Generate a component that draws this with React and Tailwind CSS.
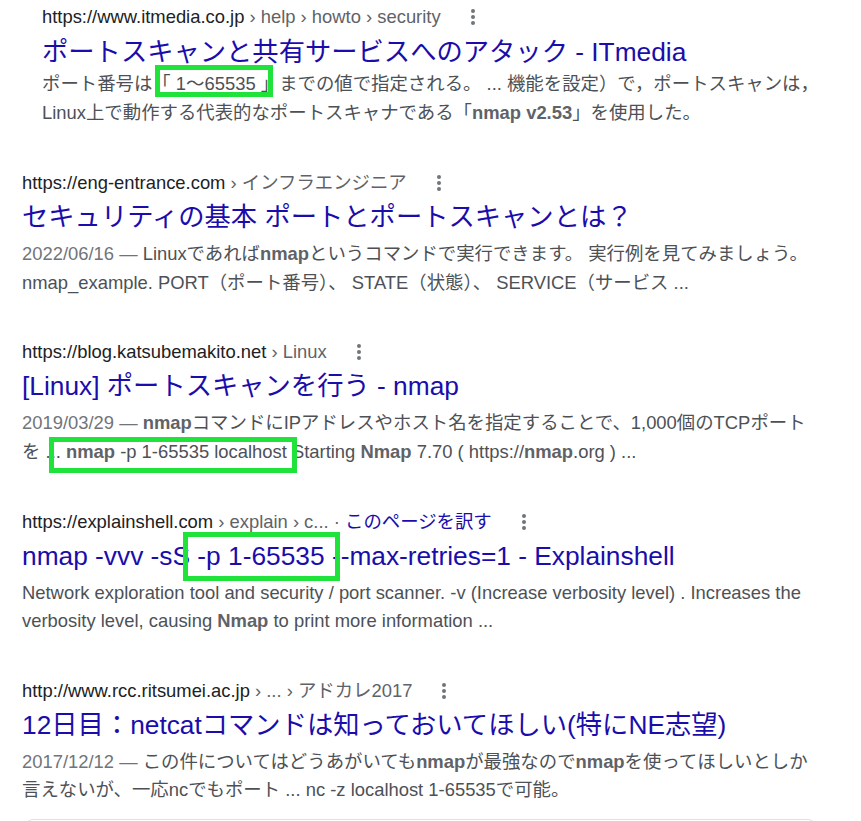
import React from "react";

function Kebab() {
  return (
    <svg width="4" height="16" viewBox="0 0 4 16" className="ml-[30px] shrink-0 fill-[#70757a]">
      <circle cx="2" cy="2" r="2" />
      <circle cx="2" cy="8" r="2" />
      <circle cx="2" cy="14" r="2" />
    </svg>
  );
}

function UrlRow({ children }) {
  return (
    <div className="flex items-center h-[26px] text-[18.4px] leading-[26px]">
      <div className="whitespace-nowrap">{children}</div>
      <Kebab />
    </div>
  );
}

const Sep = () => <span className="text-[#5f6368]"> › </span>;

function B({ children }) {
  return <b className="font-bold text-[#5f6368]">{children}</b>;
}

export default function App() {
  return (
    <div className="relative w-[861px] h-[821px] overflow-hidden bg-white font-['Liberation_Sans','Noto_Sans_CJK_JP',sans-serif]">
      {/* Result 1 */}
      <div className="pl-[42px] pt-[4px]">
        <UrlRow>
          <span className="text-[#202124]">https://www.itmedia.co.jp</span>
          <span className="text-[#5f6368]"> › help › howto › security</span>
        </UrlRow>
        <div className="mt-[5px] text-[26.3px] leading-[34px] text-[#1a0dab] whitespace-nowrap">
          ポートスキャンと共有サービスへのアタック - ITmedia
        </div>
        <div className="mt-[1px] text-[18.4px] leading-[28.6px] text-[#4d5156]">
          <div className="whitespace-nowrap">
            ポート番号は
            <span className="relative inline-block">
              「 1～65535 」
              <span className="absolute left-[3px] right-[6px] -top-[5px] bottom-[2px] border-[5px] border-[#1fe23a]"></span>
            </span>
            までの値で指定される。 ... 機能を設定）で，ポートスキャンは，
          </div>
          <div className="whitespace-nowrap">
            Linux上で動作する代表的なポートスキャナである「<B>nmap v2.53</B>」を使用した。
          </div>
        </div>
      </div>

      {/* Result 2 */}
      <div className="pl-[22px] mt-[43px]">
        <UrlRow>
          <span className="text-[#202124]">https://eng-entrance.com</span>
          <Sep />
          <span className="text-[#5f6368]">インフラエンジニア</span>
        </UrlRow>
        <div className="mt-[4px] text-[26.3px] leading-[34px] text-[#1a0dab] whitespace-nowrap">
          セキュリティの基本 ポートとポートスキャンとは？
        </div>
        <div className="mt-[6px] text-[18.4px] leading-[28.6px] text-[#4d5156]">
          <div className="whitespace-nowrap">
            <span className="text-[#70757a]">2022/06/16 — </span>
            Linuxであれば<B>nmap</B>というコマンドで実行できます。 実行例を見てみましょう。
          </div>
          <div className="whitespace-nowrap">
            nmap_example. PORT（ポート番号）、 STATE（状態）、 SERVICE（サービス ...
          </div>
        </div>
      </div>

      {/* Result 3 */}
      <div className="pl-[22px] mt-[42px]">
        <UrlRow>
          <span className="text-[#202124]">https://blog.katsubemakito.net</span>
          <Sep />
          <span className="text-[#5f6368]">Linux</span>
        </UrlRow>
        <div className="mt-[4px] text-[26.3px] leading-[34px] text-[#1a0dab] whitespace-nowrap">
          [Linux] ポートスキャンを行う - nmap
        </div>
        <div className="mt-[6px] text-[18.4px] leading-[28.6px] text-[#4d5156]">
          <div className="whitespace-nowrap">
            <span className="text-[#70757a]">2019/03/29 — </span>
            <B>nmap</B>コマンドにIPアドレスやホスト名を指定することで、1,000個のTCPポート
          </div>
          <div className="whitespace-nowrap">
            を{" "}
            <span className="relative inline-block">
              ... <B>nmap</B> -p 1-65535 localhost
              <span className="absolute left-[3px] -right-[10px] -top-[1px] -bottom-[6px] border-[5px] border-[#1fe23a]"></span>
            </span>{" "}
            Starting <B>Nmap</B> 7.70 ( https://<B>nmap</B>.org ) ...
          </div>
        </div>
      </div>

      {/* Result 4 */}
      <div className="pl-[22px] mt-[42px]">
        <UrlRow>
          <span className="text-[#202124]">https://explainshell.com</span>
          <span className="text-[#5f6368]"> › explain › c... · </span>
          <span className="text-[#1a0dab]">このページを訳す</span>
        </UrlRow>
        <div className="mt-[4px] text-[26.3px] leading-[34px] text-[#1a0dab] whitespace-nowrap">
          nmap -vvv -sS{" "}
          <span className="relative inline-block">
            -p 1-65535
            <span className="absolute -left-[14px] -right-[15px] -top-[7px] -bottom-[8px] border-[5px] border-[#1fe23a]"></span>
          </span>{" "}
          --max-retries=1 - Explainshell
        </div>
        <div className="mt-[6px] text-[18.4px] leading-[28.6px] text-[#4d5156]">
          <div className="whitespace-nowrap">
            Network exploration tool and security / port scanner. -v (Increase verbosity level) . Increases the
          </div>
          <div className="whitespace-nowrap">
            verbosity level, causing <B>Nmap</B> to print more information ...
          </div>
        </div>
      </div>

      {/* Result 5 */}
      <div className="pl-[22px] mt-[42px]">
        <UrlRow>
          <span className="text-[#202124]">http://www.rcc.ritsumei.ac.jp</span>
          <span className="text-[#5f6368]"> › ... › アドカレ2017</span>
        </UrlRow>
        <div className="mt-[4px] text-[26.3px] leading-[34px] text-[#1a0dab] whitespace-nowrap">
          12日目：netcatコマンドは知っておいてほしい(特にNE志望)
        </div>
        <div className="mt-[6px] text-[18.4px] leading-[28.6px] text-[#4d5156]">
          <div className="whitespace-nowrap">
            <span className="text-[#70757a]">2017/12/12 — </span>
            この件についてはどうあがいても<B>nmap</B>が最強なので<B>nmap</B>を使ってほしいとしか
          </div>
          <div className="whitespace-nowrap">
            言えないが、一応ncでもポート ... nc -z localhost 1-65535で可能。
          </div>
        </div>
      </div>

      <div className="ml-[25px] mt-[14px] w-[791px] h-[40px] rounded-[8px] border border-[#dfe1e5]"></div>
    </div>
  );
}
